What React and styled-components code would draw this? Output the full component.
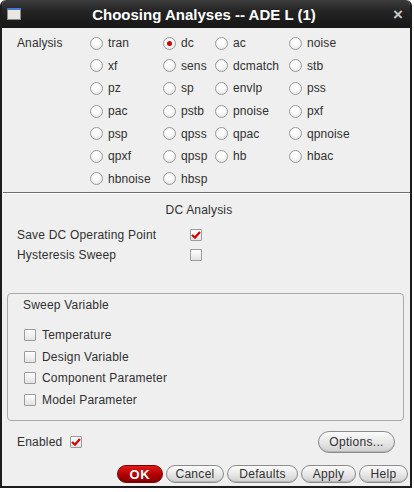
import React from 'react';
import styled, { createGlobalStyle } from 'styled-components';

const GlobalStyle = createGlobalStyle`
  html, body {
    margin: 0;
    padding: 0;
    background: #ffffff;
  }
  body {
    font-family: 'Liberation Sans', Arial, sans-serif;
  }
`;

const analyses = [
  'tran', 'dc', 'ac', 'noise',
  'xf', 'sens', 'dcmatch', 'stb',
  'pz', 'sp', 'envlp', 'pss',
  'pac', 'pstb', 'pnoise', 'pxf',
  'psp', 'qpss', 'qpac', 'qpnoise',
  'qpxf', 'qpsp', 'hb', 'hbac',
  'hbnoise', 'hbsp',
];

const sweepVars = ['Temperature', 'Design Variable', 'Component Parameter', 'Model Parameter'];

const Window = styled.div`
  width: 412px;
  height: 488px;
  box-sizing: border-box;
  display: flex;
  flex-direction: column;
  background: #efefef;
  border: 2px solid #1c1c1c;
  border-top: none;
  border-radius: 6px 6px 0 0;
  overflow: hidden;
  color: #303030;
  font-size: 12px;
`;

const TitleBar = styled.div`
  height: 28px;
  margin: 0 -2px;
  flex-shrink: 0;
  display: flex;
  align-items: center;
  padding: 0 9px 0 7px;
  background: linear-gradient(#3c3c3c, #242424 40%, #161616);
  border-radius: 6px 6px 0 0;
  color: #ffffff;
`;

const TitleText = styled.div`
  flex: 1;
  text-align: center;
  font-weight: bold;
  font-size: 15px;
  padding-right: 6px;
`;

const Close = styled.div`
  color: #c8c8c8;
  font-size: 17px;
  font-weight: bold;
  line-height: 1;
`;

const Content = styled.div`
  flex: 1;
  display: flex;
  flex-direction: column;
`;

const AnalysisRow = styled.div`
  display: flex;
  padding: 4px 0 0 15px;
`;

const Label = styled.div`
  width: 73px;
  height: 22px;
  line-height: 22px;
  letter-spacing: 0.1px;
`;

const RadioGrid = styled.div`
  display: grid;
  grid-template-columns: 73px 52px 74px auto;
  grid-auto-rows: 22.6px;
`;

const Option = styled.label`
  display: flex;
  align-items: center;
  gap: 5px;
  letter-spacing: 0.1px;
`;

const Radio = styled.span`
  width: 13px;
  height: 13px;
  box-sizing: border-box;
  border-radius: 50%;
  border: 1px solid #9a9a9a;
  background: radial-gradient(circle at 45% 35%, #ffffff 30%, #dcdcdc 100%);
  display: flex;
  align-items: center;
  justify-content: center;
  &::after {
    content: '';
    width: 5px;
    height: 5px;
    border-radius: 50%;
    background: ${({ $on }) => ($on ? '#d00000' : 'transparent')};
  }
`;

const Separator = styled.div`
  height: 1px;
  background: #6e6e6e;
  margin: 2px 0 0 1px;
  border-bottom: 1px solid #ffffff;
`;

const SectionTitle = styled.div`
  text-align: center;
  padding-top: 9px;
  height: 16px;
  letter-spacing: 0.2px;
  padding-right: 14px;
`;

const OptionRows = styled.div`
  display: flex;
  flex-direction: column;
  padding: 6px 0 0 15px;
`;

const CheckRow = styled.div`
  display: flex;
  align-items: center;
  height: 20px;
  letter-spacing: 0.2px;
`;

const RowLabel = styled.div`
  width: ${({ $w }) => $w}px;
`;

const Box = styled.span`
  width: 12px;
  height: 12px;
  box-sizing: border-box;
  border: 1px solid #9c9c9c;
  border-radius: 1px;
  background: linear-gradient(#ffffff, #e2e2e2);
  display: flex;
  align-items: center;
  justify-content: center;
  flex-shrink: 0;
`;

const Group = styled.div`
  margin: 28px 6px 0 5px;
  height: 128px;
  box-sizing: border-box;
  border: 1px solid #a9a9a9;
  border-radius: 4px;
  padding: 4px 0 0 15px;
`;

const GroupTitle = styled.div`
  height: 16px;
  letter-spacing: 0.2px;
  margin-bottom: 10px;
`;

const SweepRow = styled.label`
  display: flex;
  align-items: center;
  gap: 6px;
  height: 21.7px;
  padding-left: 1px;
  letter-spacing: 0.2px;
`;

const Footer = styled.div`
  display: flex;
  align-items: center;
  justify-content: space-between;
  padding: 10px 15px 0 15px;
`;

const Enabled = styled.div`
  display: flex;
  align-items: center;
  gap: 8px;
  letter-spacing: 0.2px;
`;

const Button = styled.button`
  font-family: 'Liberation Sans', Arial, sans-serif;
  font-size: ${({ $primary }) => ($primary ? '13px' : '12px')};
  font-weight: ${({ $primary }) => ($primary ? 'bold' : 'normal')};
  letter-spacing: ${({ $primary }) => ($primary ? '0.8px' : '0.3px')};
  color: ${({ $primary }) => ($primary ? '#ffffff' : '#303030')};
  width: ${({ $w }) => $w}px;
  height: ${({ $h }) => $h || 18}px;
  padding: 0;
  border-radius: ${({ $h }) => ($h || 18) / 2}px;
  border: 1px solid ${({ $primary }) => ($primary ? '#7a0000' : '#8c8c8c')};
  background: ${({ $primary }) =>
    $primary
      ? 'linear-gradient(#e41a1a, #b00000 55%, #8a0000)'
      : 'linear-gradient(#fbfbfb, #e6e6e6 55%, #cfcfcf)'};
  box-shadow: inset 0 -1px 0 rgba(0, 0, 0, 0.12);
`;

const ButtonBar = styled.div`
  display: flex;
  justify-content: flex-end;
  gap: 3px;
  padding: 12px 2px 0 0;
`;

const Check = () => (
  <svg width="10" height="8" viewBox="0 0 10 8">
    <path d="M1 4 L4 6.6 L9 1" fill="none" stroke="#d40000" strokeWidth="2.2" />
  </svg>
);

const WindowIcon = () => (
  <svg width="14" height="12" viewBox="0 0 14 12">
    <rect x="0.5" y="0.5" width="13" height="11" fill="#e8e8e0" stroke="#8a8a8a" />
    <rect x="0" y="0" width="14" height="2" fill="#4a7ad0" />
  </svg>
);

const CheckBox = ({ on }) => <Box>{on && <Check />}</Box>;

export default function App() {
  return (
    <>
      <GlobalStyle />
      <Window>
        <TitleBar>
          <WindowIcon />
          <TitleText>Choosing Analyses -- ADE L (1)</TitleText>
          <Close>×</Close>
        </TitleBar>
        <Content>
          <AnalysisRow>
            <Label>Analysis</Label>
            <RadioGrid>
              {analyses.map((a) => (
                <Option key={a}>
                  <Radio $on={a === 'dc'} />
                  {a}
                </Option>
              ))}
            </RadioGrid>
          </AnalysisRow>
          <Separator />
          <SectionTitle>DC Analysis</SectionTitle>
          <OptionRows>
            <CheckRow>
              <RowLabel $w={173}>Save DC Operating Point</RowLabel>
              <CheckBox on />
            </CheckRow>
            <CheckRow>
              <RowLabel $w={173}>Hysteresis Sweep</RowLabel>
              <CheckBox />
            </CheckRow>
          </OptionRows>
          <Group>
            <GroupTitle>Sweep Variable</GroupTitle>
            {sweepVars.map((v) => (
              <SweepRow key={v}>
                <CheckBox />
                {v}
              </SweepRow>
            ))}
          </Group>
          <Footer>
            <Enabled>
              Enabled
              <CheckBox on />
            </Enabled>
            <Button $w={77} $h={22}>Options...</Button>
          </Footer>
          <ButtonBar>
            <Button $primary $w={46}>OK</Button>
            <Button $w={58}>Cancel</Button>
            <Button $w={71}>Defaults</Button>
            <Button $w={55}>Apply</Button>
            <Button $w={49}>Help</Button>
          </ButtonBar>
        </Content>
      </Window>
    </>
  );
}
